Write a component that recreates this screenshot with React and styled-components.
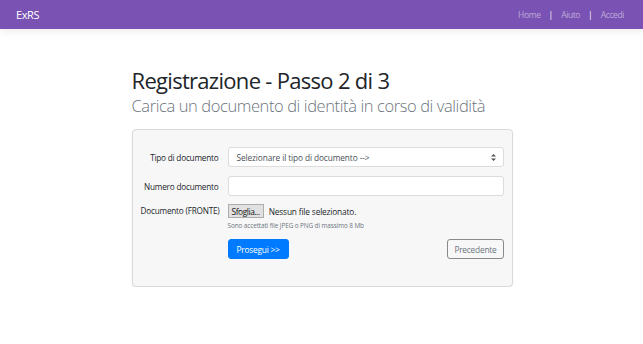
import React from "react";
import styled, { createGlobalStyle } from "styled-components";

const GlobalStyle = createGlobalStyle`
  html, body {
    margin: 0;
    padding: 0;
    background: #ffffff;
    font-family: "Open Sans", "Noto Sans", sans-serif;
  }
`;

const App = () => {
  return (
    <>
      <GlobalStyle />
      <Navbar>
        <Brand>ExRS</Brand>
        <NavLinks>
          <NavLink>Home</NavLink>
          <Sep>|</Sep>
          <NavLink>Aiuto</NavLink>
          <Sep>|</Sep>
          <NavLink>Accedi</NavLink>
        </NavLinks>
      </Navbar>
      <Main>
        <Title>Registrazione - Passo 2 di 3</Title>
        <Subtitle>Carica un documento di identità in corso di validità</Subtitle>
        <Card>
          <Label>Tipo di documento</Label>
          <Select>
            <span>Selezionare il tipo di documento --&gt;</span>
            <svg width="5" height="7" viewBox="0 0 5 7">
              <path d="M2.5 0 L5 2.6 H0 Z M0 4.4 H5 L2.5 7 Z" fill="#555" />
            </svg>
          </Select>
          <Label>Numero documento</Label>
          <Input />
          <Label $top>Documento (FRONTE)</Label>
          <FileField>
            <FileRow>
              <BrowseButton>Sfoglia...</BrowseButton>
              <FileName>Nessun file selezionato.</FileName>
            </FileRow>
            <Help>Sono accettati file JPEG o PNG di massimo 8 Mb</Help>
          </FileField>
          <span />
          <Actions>
            <Button $primary>Prosegui &gt;&gt;</Button>
            <Button>Precedente</Button>
          </Actions>
        </Card>
      </Main>
    </>
  );
};

const Navbar = styled.header`
  height: 29px;
  background: #7952b3;
  display: flex;
  align-items: center;
  justify-content: space-between;
  padding: 0 19px 0 16px;
  box-shadow: 0 3px 8px rgba(0, 0, 0, 0.07);
`;

const Brand = styled.div`
  color: #ffffff;
  font-size: 11px;
  letter-spacing: -0.4px;
`;

const NavLinks = styled.nav`
  display: flex;
  align-items: center;
  gap: 8px;
  font-size: 8.5px;
`;

const NavLink = styled.a`
  color: rgba(255, 255, 255, 0.5);
  letter-spacing: -0.4px;
`;

const Sep = styled.span`
  color: #ffffff;
`;

const Main = styled.main`
  width: 381px;
  margin: 0 auto;
  padding: 36px 0 0 1px;
`;

const Title = styled.h1`
  margin: 0;
  font-weight: 400;
  font-size: 22px;
  line-height: 30px;
  color: #212529;
  letter-spacing: -0.7px;
`;

const Subtitle = styled.h2`
  margin: 0 0 12px;
  font-weight: 300;
  font-size: 16.5px;
  line-height: 22px;
  color: #6c757d;
  letter-spacing: -0.4px;
`;

const Card = styled.section`
  background: #f7f7f7;
  border: 1px solid #d9d9d9;
  border-radius: 4px;
  box-shadow: 0 1px 2px rgba(0, 0, 0, 0.05);
  display: grid;
  grid-template-columns: 78px 1fr;
  column-gap: 9px;
  row-gap: 9px;
  align-items: center;
  padding: 17px 8px 27px 8px;
`;

const Label = styled.label`
  text-align: right;
  font-size: 8.2px;
  color: #212529;
  white-space: nowrap;
  letter-spacing: -0.2px;
  align-self: ${({ $top }) => ($top ? "start" : "center")};
  line-height: ${({ $top }) => ($top ? "14px" : "normal")};
  margin-top: ${({ $top }) => ($top ? "-1px" : "0")};
`;

const Select = styled.div`
  height: 18px;
  background: #ffffff;
  border: 1px solid #dcdcdc;
  border-radius: 3px;
  display: flex;
  align-items: center;
  justify-content: space-between;
  padding: 0 7px 0 8px;
  font-size: 8.3px;
  color: #495057;
  letter-spacing: -0.1px;
`;

const Input = styled.div`
  height: 18px;
  background: #ffffff;
  border: 1px solid #dcdcdc;
  border-radius: 3px;
`;

const FileField = styled.div`
  display: flex;
  flex-direction: column;
  gap: 3px;
  margin-top: -1px;
`;

const FileRow = styled.div`
  display: flex;
  align-items: center;
  gap: 5px;
  height: 14px;
`;

const BrowseButton = styled.span`
  height: 12px;
  padding: 0 3px;
  display: flex;
  align-items: center;
  background: #e1e1e1;
  border: 1px solid #adadad;
  font-size: 8.3px;
  color: #111;
  letter-spacing: -0.4px;
`;

const FileName = styled.span`
  font-size: 8.3px;
  color: #212529;
  letter-spacing: -0.15px;
`;

const Help = styled.small`
  font-size: 6.4px;
  color: #6c757d;
  letter-spacing: -0.1px;
`;

const Actions = styled.div`
  display: flex;
  justify-content: space-between;
  align-items: center;
`;

const Button = styled.button`
  height: 20px;
  padding: 0 ${({ $primary }) => ($primary ? "8px" : "6px")};
  font-family: inherit;
  font-size: 8.3px;
  letter-spacing: -0.2px;
  border-radius: 3px;
  border: 1px solid ${({ $primary }) => ($primary ? "#007bff" : "#8a8a8a")};
  background: ${({ $primary }) => ($primary ? "#007bff" : "transparent")};
  color: ${({ $primary }) => ($primary ? "#ffffff" : "#6c757d")};
`;

export default App;
